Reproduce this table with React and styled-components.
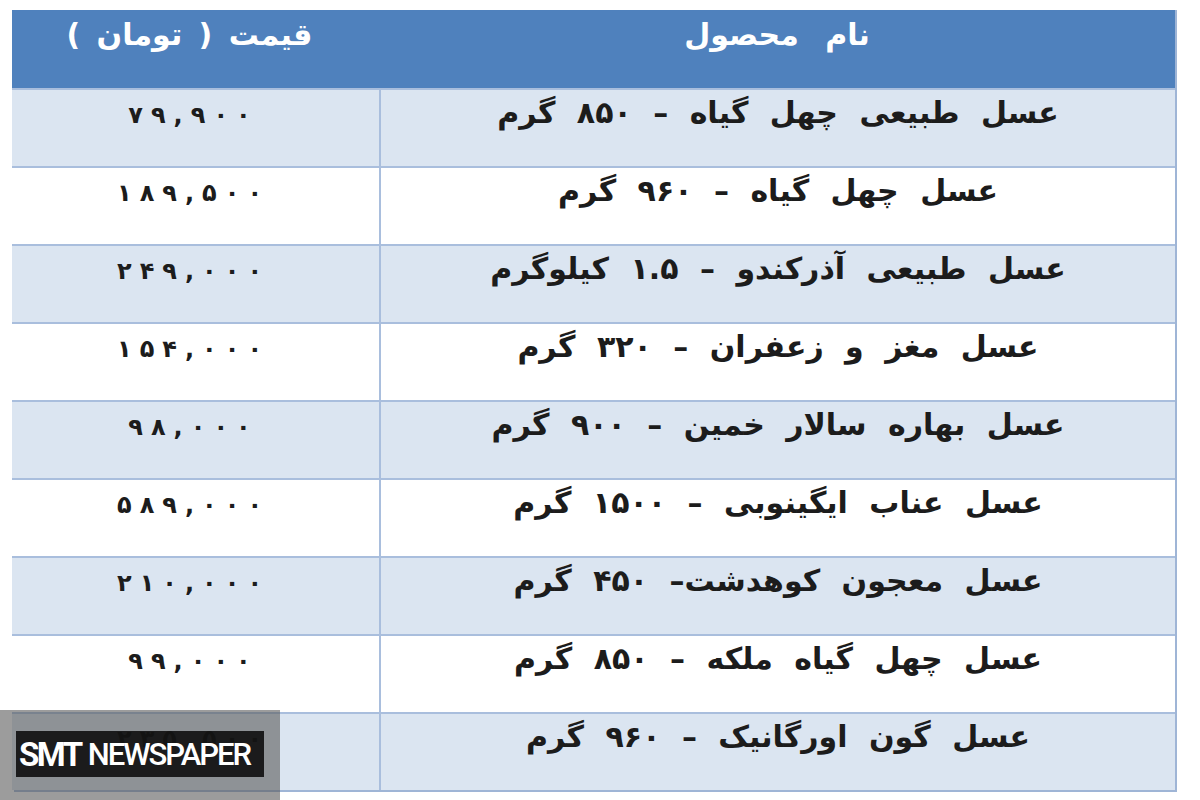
import React from 'react';
import styled, { createGlobalStyle } from 'styled-components';

var GlobalStyle = createGlobalStyle`
    html, body {
        margin : 0;
        padding : 0;
        background : #ffffff;
    }
    body {
        width : 1200px;
        height : 800px;
        overflow : hidden;
        font-family : "DejaVu Sans", "Noto Sans", sans-serif;
    }
`

var Page = styled.div`
    position : relative;
    width : 1200px;
    height : 800px;
    padding : 10px 23px 0 14px;
    box-sizing : border-box;
`

var Table = styled.div`
    direction : rtl;
    display : grid;
    grid-template-columns : 796px 367px;
    grid-auto-rows : 78px;
    border : 2px solid #9fb5d6;
    border-top : none;
    box-sizing : border-box;
    width : 1163px;
`

var HeadCell = styled.div`
    background : #4f81bd;
    color : #ffffff;
    font-weight : bold;
    font-size : 30px;
    word-spacing : ${p => p.$wide ? '16px' : '6px'};
    text-align : center;
    padding-top : 6px;
    padding-right : ${p => p.$wide ? '0' : '12px'};
    line-height : 38px;
    box-sizing : border-box;
`

var Cell = styled.div`
    background : ${p => p.$shaded ? '#dbe5f1' : '#ffffff'};
    color : #1c1c1c;
    font-weight : bold;
    font-size : 30px;
    word-spacing : 11px;
    text-align : center;
    padding-top : 4px;
    line-height : 38px;
    border-top : 2px solid #a9bedd;
    border-left : 2px solid #a9bedd;
    box-sizing : border-box;
`

var PriceCell = styled(Cell)`
    border-left : none;
    padding-top : 6px;
    padding-right : 12px;
    direction : ltr;
    font-size : 24px;
`

var Digit = styled.span`
    display : inline-block;
    margin : 0 4px;
`

var Watermark = styled.div`
    position : absolute;
    left : 0;
    top : 710px;
    width : 280px;
    height : 90px;
    background : rgba(90, 90, 90, 0.6);
    padding : 21px 16px 0 16px;
    box-sizing : border-box;
`

var Badge = styled.div`
    background : rgba(14, 14, 14, 0.9);
    color : #ffffff;
    height : 46px;
    display : flex;
    align-items : center;
    padding-left : 3px;
    font-family : Roboto, "Liberation Sans", sans-serif;
    white-space : nowrap;
`

var Brand = styled.span`
    font-weight : bold;
    font-size : 33px;
    letter-spacing : -2.5px;
    margin-right : 7px;
`

var BrandRest = styled.span`
    font-weight : 500;
    font-size : 31px;
    letter-spacing : -2px;
`

var rows = [
    ['عسل طبیعی چهل گیاه – ۸۵۰ گرم', '۷۹,۹۰۰'],
    ['عسل چهل گیاه – ۹۶۰ گرم', '۱۸۹,۵۰۰'],
    ['عسل طبیعی آذرکندو – ۱.۵ کیلوگرم', '۲۴۹,۰۰۰'],
    ['عسل مغز و زعفران – ۳۲۰ گرم', '۱۵۴,۰۰۰'],
    ['عسل بهاره سالار خمین – ۹۰۰ گرم', '۹۸,۰۰۰'],
    ['عسل عناب ایگینوبی – ۱۵۰۰ گرم', '۵۸۹,۰۰۰'],
    ['عسل معجون کوهدشت– ۴۵۰ گرم', '۲۱۰,۰۰۰'],
    ['عسل چهل گیاه ملکه – ۸۵۰ گرم', '۹۹,۰۰۰'],
    ['عسل گون اورگانیک – ۹۶۰ گرم', '۲۳۵,۵۰۰'],
];

export default function App() {
    return (
        <>
            <GlobalStyle />
            <Page>
                <Table>
                    <HeadCell $wide>نام محصول</HeadCell>
                    <HeadCell>قیمت ( تومان )</HeadCell>
                    {rows.map(([name, price], i) => (
                        <React.Fragment key={i}>
                            <Cell $shaded={i % 2 === 0}>{name}</Cell>
                            <PriceCell $shaded={i % 2 === 0}>
                                {price.split('').map((ch, j) => <Digit key={j}>{ch}</Digit>)}
                            </PriceCell>
                        </React.Fragment>
                    ))}
                </Table>
                <Watermark>
                    <Badge>
                        <Brand>SMT</Brand>
                        <BrandRest>NEWSPAPER</BrandRest>
                    </Badge>
                </Watermark>
            </Page>
        </>
    )
}
